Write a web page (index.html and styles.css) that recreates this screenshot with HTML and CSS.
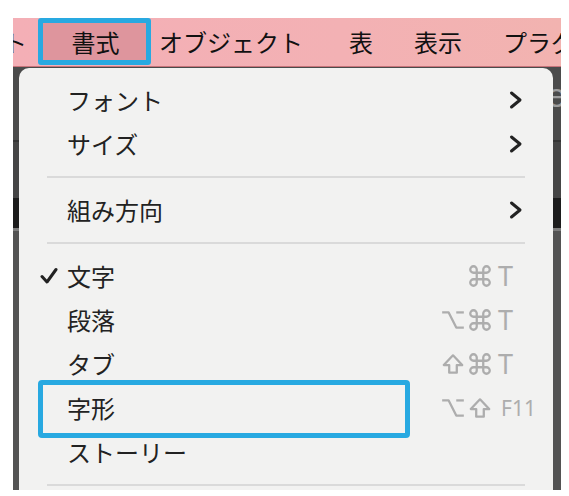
FILE: index.html
```html
<!DOCTYPE html>
<html lang="ja">
<head>
<meta charset="utf-8">
<link rel="stylesheet" href="styles.css">
</head>
<body>
<div class="screen">
  <div class="bar">
    <span class="bi cut">ト</span>
    <span class="bi active">書式</span>
    <span class="bi obj">オブジェクト</span>
    <span class="bi tbl">表</span>
    <span class="bi view">表示</span>
    <span class="bi plug">プラグイン</span>
  </div>
  <div class="app">
    <div class="bg-a"><span class="ghost">e</span></div>
    <div class="bg-line"></div>
    <div class="bg-b"></div>
    <div class="bg-c"></div>
    <div class="bg-line2"></div>
    <div class="bg-d"></div>
  </div>
  <div class="panel">
    <div class="row">
      <span class="chk"></span><span class="lbl">フォント</span>
      <svg class="chev" viewBox="0 0 14 20"><polyline points="2.5,3 11,10 2.5,17"/></svg>
    </div>
    <div class="row">
      <span class="chk"></span><span class="lbl">サイズ</span>
      <svg class="chev" viewBox="0 0 14 20"><polyline points="2.5,3 11,10 2.5,17"/></svg>
    </div>
    <div class="sep"></div>
    <div class="row">
      <span class="chk"></span><span class="lbl">組み方向</span>
      <svg class="chev" viewBox="0 0 14 20"><polyline points="2.5,3 11,10 2.5,17"/></svg>
    </div>
    <div class="sep"></div>
    <div class="row">
      <span class="chk"><svg class="tick" viewBox="0 0 18 18"><polyline points="2,9.5 7,15 16,2.5"/></svg></span><span class="lbl">文字</span>
      <span class="keys">
        <span class="m m1"></span>
        <svg class="m m2" viewBox="0 0 24 24"><path d="M15 6v12a3 3 0 1 0 3-3H6a3 3 0 1 0 3 3V6a3 3 0 1 0-3 3h12a3 3 0 1 0-3-3"/></svg>
        <span class="k">T</span>
      </span>
    </div>
    <div class="row">
      <span class="chk"></span><span class="lbl">段落</span>
      <span class="keys">
        <svg class="m m1" viewBox="0 0 24 24"><path d="M2 5h6l7 14h7"/><path d="M15 5h7"/></svg>
        <svg class="m m2" viewBox="0 0 24 24"><path d="M15 6v12a3 3 0 1 0 3-3H6a3 3 0 1 0 3 3V6a3 3 0 1 0-3 3h12a3 3 0 1 0-3-3"/></svg>
        <span class="k">T</span>
      </span>
    </div>
    <div class="row">
      <span class="chk"></span><span class="lbl">タブ</span>
      <span class="keys">
        <svg class="m m1" viewBox="0 0 24 24"><path d="M8.5 20v-7H3.5L12 4l8.5 9h-5v7z"/></svg>
        <svg class="m m2" viewBox="0 0 24 24"><path d="M15 6v12a3 3 0 1 0 3-3H6a3 3 0 1 0 3 3V6a3 3 0 1 0-3 3h12a3 3 0 1 0-3-3"/></svg>
        <span class="k">T</span>
      </span>
    </div>
    <div class="row">
      <span class="hl"></span>
      <span class="chk"></span><span class="lbl">字形</span>
      <span class="keys">
        <svg class="m m1" viewBox="0 0 24 24"><path d="M2 5h6l7 14h7"/><path d="M15 5h7"/></svg>
        <svg class="m m2" viewBox="0 0 24 24"><path d="M8.5 20v-7H3.5L12 4l8.5 9h-5v7z"/></svg>
        <span class="k small">F11</span>
      </span>
    </div>
    <div class="row">
      <span class="chk"></span><span class="lbl">ストーリー</span>
    </div>
    <div class="sep"></div>
  </div>
</div>
</body>
</html>
```
FILE: styles.css
```css
html, body {
  margin: 0;
  padding: 0;
  background: #ffffff;
}
body {
  width: 569px;
  height: 496px;
  overflow: hidden;
  font-family: "Noto Sans CJK JP", "Noto Sans", sans-serif;
}
.screen {
  position: relative;
  margin: 18px 0 0 13px;
  width: 548px;
  height: 472px;
  overflow: hidden;
  background: #4b4b4b;
}
.bar {
  height: 48px;
  display: flex;
  align-items: flex-start;
  white-space: nowrap;
  background: linear-gradient(90deg, #f4afb6 0%, #f3b1b4 60%, #f2b3b0 100%);
  border-bottom: 1px solid #c7737a;
  font-size: 24px;
  color: #111;
}
.bi {
  height: 47px;
  line-height: 47px;
  flex: none;
}
.cut { margin-left: -10px; }
.active {
  box-sizing: border-box;
  width: 113px;
  margin-left: 11px;
  text-align: center;
  background: #de959d;
  border: 5px solid #28a9e1;
  border-radius: 3px;
  line-height: 37px;
  padding-left: 2px;
}
.obj { margin-left: 8px; }
.tbl { margin-left: 46px; }
.view { margin-left: 41px; }
.plug { margin-left: 41px; }

.app { display: flex; flex-direction: column; }
.bg-a {
  height: 73px;
  background: #4b4b4b;
  box-sizing: border-box;
  padding: 11px 0 0 534px;
}
.ghost {
  font-family: "Liberation Sans", sans-serif;
  font-size: 34px;
  line-height: 34px;
  color: #9d9d9d;
}
.bg-line { height: 2px; background: #353535; }
.bg-b { height: 56px; background: #454545; }
.bg-c { height: 30px; background: #1c1c1c; }
.bg-line2 { height: 3px; background: #7c7c7c; }
.bg-d { height: 400px; background: #535353; }

.panel {
  position: absolute;
  left: 6px;
  top: 50px;
  width: 534px;
  height: 440px;
  box-sizing: border-box;
  padding-top: 10px;
  background: #f2f2f1;
  border-radius: 10px 10px 0 0;
}
.row {
  position: relative;
  height: 44px;
  display: flex;
  align-items: center;
}
.chk {
  width: 48px;
  box-sizing: border-box;
  padding-left: 21px;
  display: flex;
  align-items: center;
  flex: none;
}
.tick {
  width: 18px;
  height: 18px;
  fill: none;
  stroke: #222;
  stroke-width: 3;
  stroke-linecap: round;
  stroke-linejoin: round;
}
.lbl {
  flex: 1;
  font-size: 24px;
  color: #222;
  line-height: 44px;
}
.chev {
  width: 14px;
  height: 20px;
  margin-right: 30px;
  fill: none;
  stroke: #222;
  stroke-width: 3;
  stroke-linecap: round;
  stroke-linejoin: round;
}
.keys {
  display: flex;
  align-items: center;
  width: 93px;
  margin-right: 20px;
}
.m {
  width: 26px;
  height: 26px;
  flex: none;
  fill: none;
  stroke: #adadad;
  stroke-width: 2.1;
  stroke-linejoin: round;
}
.m1 { margin-right: 1px; display: block; }
.m2 { margin-right: 5px; }
.k {
  font-family: "Noto Sans", "Open Sans", sans-serif;
  font-weight: 400;
  font-size: 27px;
  line-height: 30px;
  color: #adadad;
}
.k.small {
  font-size: 21px;
  padding-left: 3px;
}
.hl {
  position: absolute;
  left: 19px;
  top: -6px;
  width: 372px;
  height: 58px;
  box-sizing: border-box;
  border: 5px solid #28a9e1;
  border-radius: 4px;
}
.sep {
  height: 2px;
  margin: 10px 28px;
  background: #dadada;
}
```
